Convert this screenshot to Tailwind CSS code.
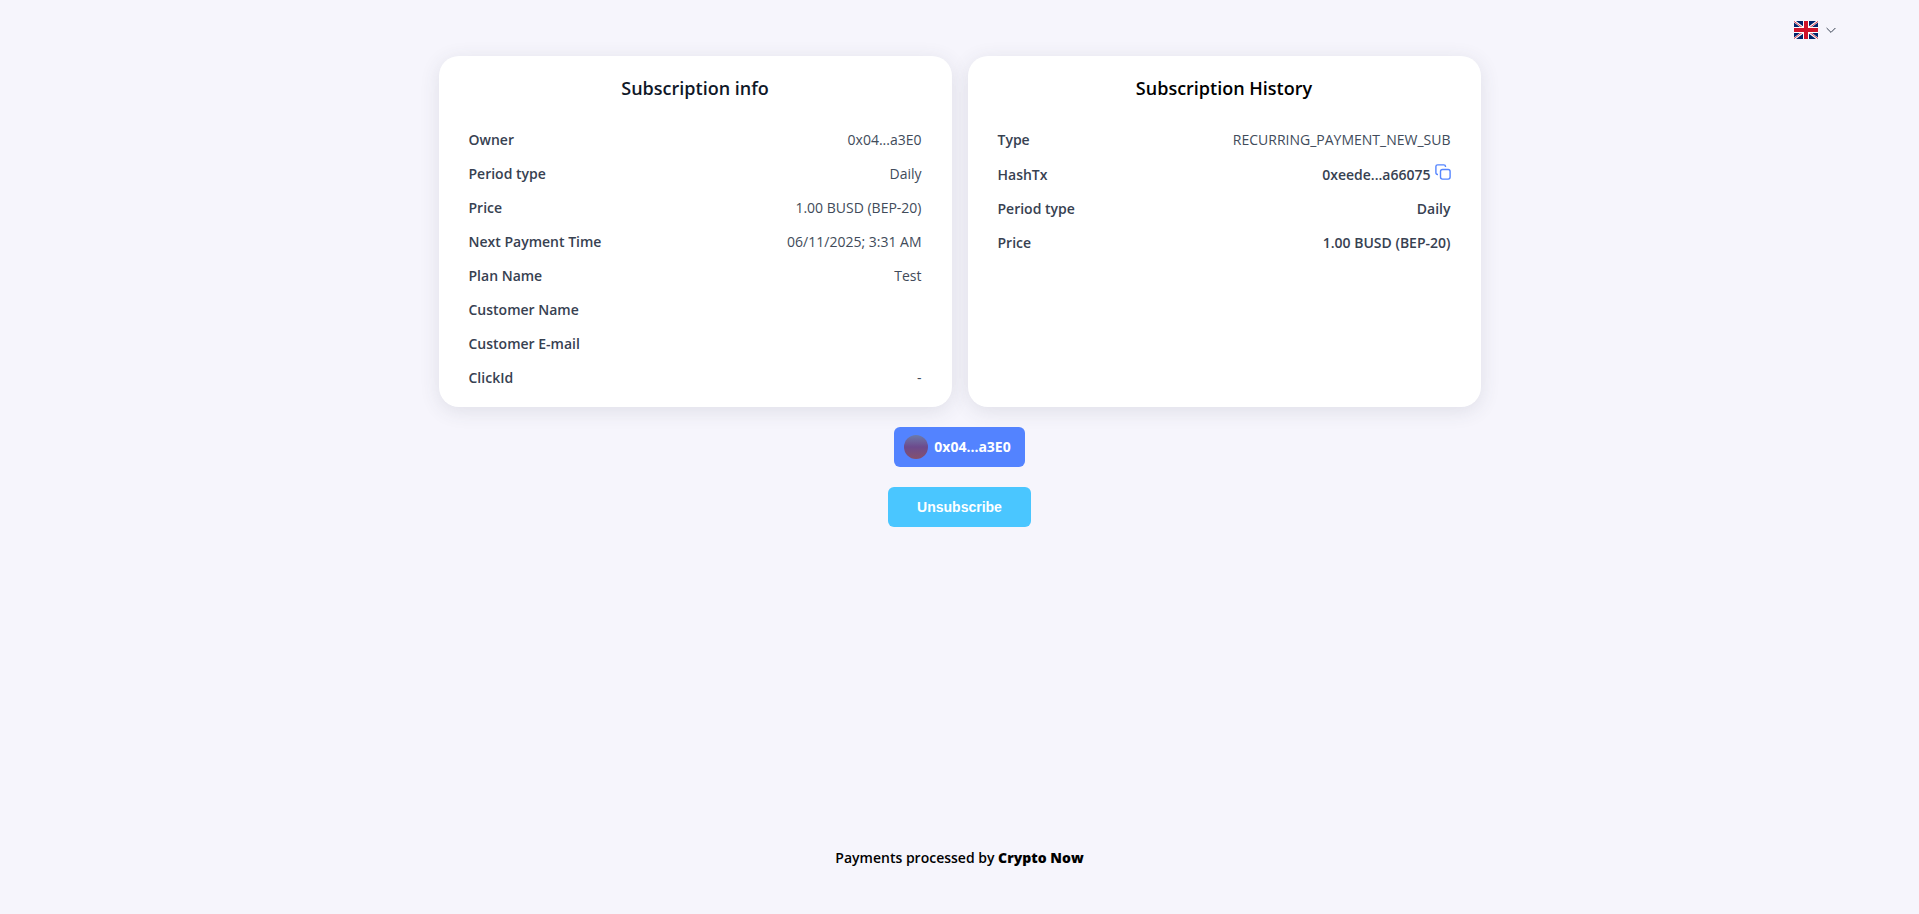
<!DOCTYPE html>
<html lang="en">
<head>
  <meta charset="UTF-8" />
  <meta name="viewport" content="width=device-width, initial-scale=1.0" />
  <title>Subscription info | Crypto Now</title>
  <script src="https://cdn.jsdelivr.net/npm/@tailwindcss/browser@4"></script>
</head>
<body class="flex min-h-screen flex-col bg-[#f6f5fc] font-['Open_Sans','Noto_Sans',sans-serif] text-sm text-[#374151]">
  <header class="flex h-14 items-center justify-end px-[79px] pt-1">
    <button type="button" aria-label="Language: English" class="flex items-center gap-2 px-1">
      <svg class="h-[18px] w-6" viewBox="0 0 24 18" aria-hidden="true">
        <path fill="#00246b" d="M0 0h24v18H0z" />
        <path stroke="#fff" stroke-width="2.400" d="m0 0 24 18M24 0 0 18" />
        <path stroke="#cf142b" stroke-width=".8" d="m0 .4 11 8.200M24 17.600l-11-8.200M24 .4l-11 8.200M0 17.600l11-8.200" />
        <path stroke="#fff" stroke-width="6" d="M12 0v18M0 9h24" />
        <path stroke="#cf142b" stroke-width="4" d="M12 0v18M0 9h24" />
      </svg>
      <svg class="size-[10px]" viewBox="0 0 10 10" fill="none" stroke="#374151" aria-hidden="true">
        <path d="M.6 3 5 7.400 9.400 3" />
      </svg>
    </button>
  </header>

  <main class="mx-auto flex w-full max-w-[1042px] flex-1 flex-col items-center">
    <div class="grid w-full gap-4 md:grid-cols-2">
      <section class="rounded-[20px] bg-white px-[30px] pt-5 pb-3 shadow-[0_4px_20px_rgba(55,65,81,0.12)]">
        <h2 class="mb-[23px] text-center text-lg leading-6 font-semibold text-gray-900">Subscription info</h2>
        <dl>
          <div class="flex h-[34px] items-center justify-between">
            <dt class="font-semibold">Owner</dt>
            <dd class="text-[#414b5a]">0x04...a3E0</dd>
          </div>
          <div class="flex h-[34px] items-center justify-between">
            <dt class="font-semibold">Period type</dt>
            <dd class="text-[#414b5a]">Daily</dd>
          </div>
          <div class="flex h-[34px] items-center justify-between">
            <dt class="font-semibold">Price</dt>
            <dd class="text-[#414b5a]">1.00 BUSD (BEP-20)</dd>
          </div>
          <div class="flex h-[34px] items-center justify-between">
            <dt class="font-semibold">Next Payment Time</dt>
            <dd class="text-[#414b5a]">06/11/2025; 3:31 AM</dd>
          </div>
          <div class="flex h-[34px] items-center justify-between">
            <dt class="font-semibold">Plan Name</dt>
            <dd class="text-[#414b5a]">Test</dd>
          </div>
          <div class="flex h-[34px] items-center justify-between">
            <dt class="font-semibold">Customer Name</dt>
            <dd class="text-[#414b5a]"></dd>
          </div>
          <div class="flex h-[34px] items-center justify-between">
            <dt class="font-semibold">Customer E-mail</dt>
            <dd class="text-[#414b5a]"></dd>
          </div>
          <div class="flex h-[34px] items-center justify-between">
            <dt class="font-semibold">ClickId</dt>
            <dd class="text-[#414b5a]">-</dd>
          </div>
        </dl>
      </section>

      <section class="rounded-[20px] bg-white px-[30px] pt-5 pb-3 shadow-[0_4px_20px_rgba(55,65,81,0.12)]">
        <h2 class="mb-[23px] text-center text-lg leading-6 font-semibold text-black">Subscription History</h2>
        <dl>
          <div class="flex h-[34px] items-center justify-between">
            <dt class="font-semibold">Type</dt>
            <dd class="text-[#414b5a]">RECURRING_PAYMENT_NEW_SUB</dd>
          </div>
          <div class="flex h-[35px] items-center justify-between font-semibold">
            <dt>HashTx</dt>
            <dd class="flex items-center gap-1">
              0xeede...a66075
              <button type="button" aria-label="Copy transaction hash" class="mb-1.5">
                <svg class="size-4" viewBox="0 0 16 16" fill="none" stroke="#5585ff" stroke-width="1.4" aria-hidden="true">
                  <rect x="5.500" y="5.500" width="9.600" height="9.600" rx="2" />
                  <path d="M3 10.500h-.4a1.700 1.700 0 0 1-1.700-1.700V2.600A1.700 1.700 0 0 1 2.600.9h6.200a1.700 1.700 0 0 1 1.700 1.700V3" />
                </svg>
              </button>
            </dd>
          </div>
          <div class="flex h-[34px] items-center justify-between font-semibold">
            <dt>Period type</dt>
            <dd>Daily</dd>
          </div>
          <div class="flex h-[34px] items-center justify-between font-semibold">
            <dt>Price</dt>
            <dd>1.00 BUSD (BEP-20)</dd>
          </div>
        </dl>
      </section>
    </div>

    <button type="button" class="mt-5 flex h-10 items-center gap-1.5 rounded-md bg-[#5383ff] pr-3.5 pl-2.5 text-sm font-bold text-white">
      <span class="size-6 rounded-full bg-linear-to-b from-[#6a7bab] via-[#6c4a8c] to-[#85506d]"></span>
      0x04...a3E0
    </button>
    <button type="button" class="mt-5 h-10 rounded-md bg-[#4ac6ff] px-[29px] font-['Liberation_Sans',Arial,sans-serif] text-sm font-bold text-white">Unsubscribe</button>
  </main>

  <footer class="pb-[46px] text-center font-semibold text-black">
    Payments processed by <a href="#" class="font-extrabold">Crypto Now</a>
  </footer>
</body>
</html>
